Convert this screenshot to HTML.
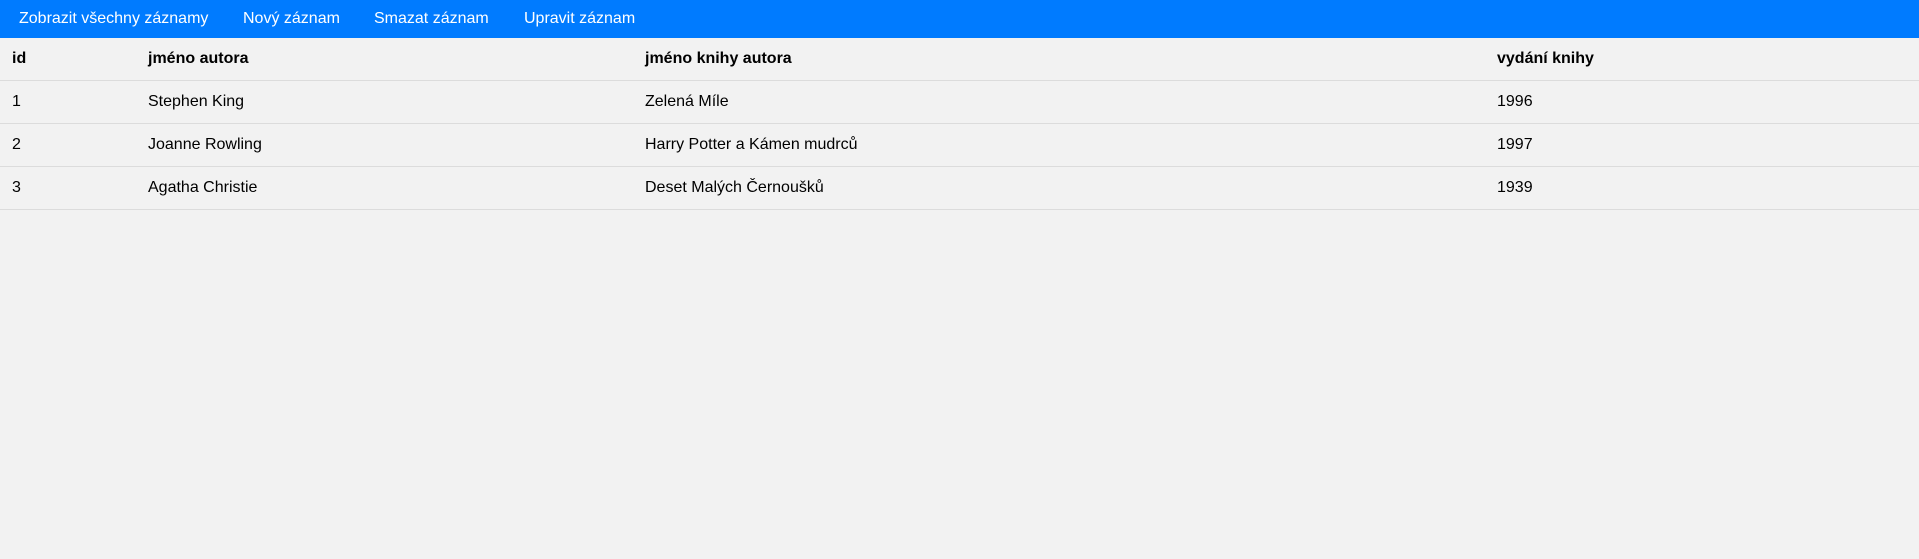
<!DOCTYPE html>
<html><head><meta charset="utf-8"><style>
*{margin:0;padding:0;box-sizing:border-box}
body{width:1919px;height:559px;background:#f2f2f2;font-family:"Liberation Sans",Arial,sans-serif;font-size:16px;color:#000;overflow:hidden;position:relative}
.nav{position:absolute;left:0;top:0;width:1919px;height:38px;background:#007bff}
.nav span{position:absolute;top:0;line-height:38px;color:#fff;white-space:nowrap}
.row{position:absolute;left:0;width:1919px;height:43px;border-bottom:1px solid #dcdcdc}
.row span{position:absolute;top:0;line-height:42px;white-space:nowrap}
.h span{font-weight:bold}
</style></head><body>
<div class="nav">
<span style="left:19px">Zobrazit všechny záznamy</span>
<span style="left:243px">Nový záznam</span>
<span style="left:374px">Smazat záznam</span>
<span style="left:524px">Upravit záznam</span>
</div>
<div class="row h" style="top:38px"><span style="left:12px">id</span><span style="left:148px">jméno autora</span><span style="left:645px">jméno knihy autora</span><span style="left:1497px">vydání knihy</span></div>
<div class="row" style="top:81px"><span style="left:12px">1</span><span style="left:148px">Stephen King</span><span style="left:645px">Zelená Míle</span><span style="left:1497px">1996</span></div>
<div class="row" style="top:124px"><span style="left:12px">2</span><span style="left:148px">Joanne Rowling</span><span style="left:645px">Harry Potter a Kámen mudrců</span><span style="left:1497px">1997</span></div>
<div class="row" style="top:167px"><span style="left:12px">3</span><span style="left:148px">Agatha Christie</span><span style="left:645px">Deset Malých Černoušků</span><span style="left:1497px">1939</span></div>
</body></html>
